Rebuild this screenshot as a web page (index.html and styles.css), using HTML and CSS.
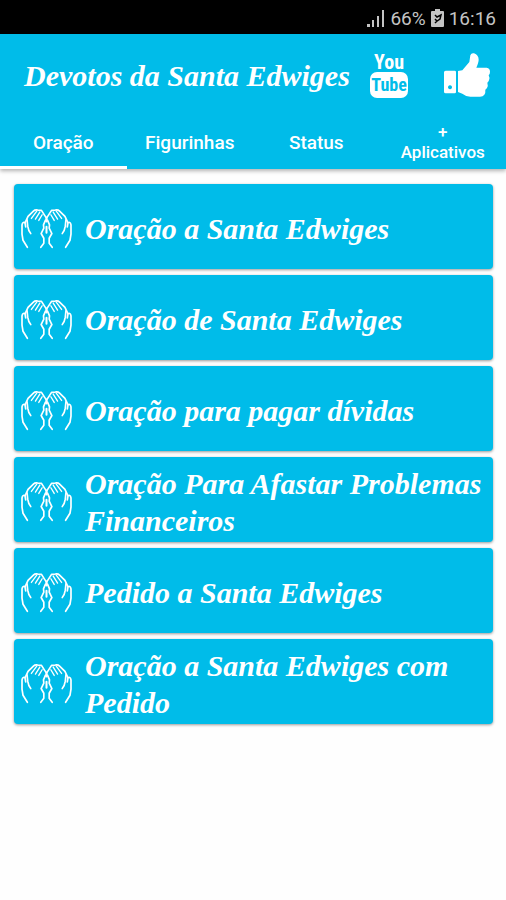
FILE: index.html
```html
<!DOCTYPE html>
<html lang="pt-BR">
<head>
<meta charset="utf-8">
<meta name="viewport" content="width=device-width, initial-scale=1">
<title>Devotos da Santa Edwiges</title>
<link rel="stylesheet" href="styles.css">
</head>
<body>
<svg class="defs" aria-hidden="true">
  <symbol id="hands" viewBox="15 20 152 122">
    <g fill="none" stroke="currentColor" stroke-linecap="round" stroke-linejoin="round">
      <g id="hand" stroke-width="5">
        <path d="M34 137L21 116L18 98V70Q20 60 27 64L29 76M28 62L36 45L52 29Q57 24 65 26L76 27L85 41L91 50"/>
        <path d="M33 55L35 74Q37 88 44 96"/>
        <path d="M62 29L46 51M71 32L58 53M78 40L68 57" stroke-width="4"/>
        <path d="M88 56L82 70L83 80L75 96L83 110V125L74 137"/>
      </g>
      <use href="#hand" transform="matrix(-1 0 0 1 182 0)"/>
      <path d="M91 48V60M91 76V94" stroke-width="6"/>
    </g>
  </symbol>
</svg>
<div class="status">
  <svg class="signal" viewBox="0 0 18 18" aria-hidden="true"><path d="M0 18v-3h3v3zM5 18v-7h2v7zM10 18V7h2v11zM15 18V1h2v17z" fill="currentColor"/></svg>
  <span>66%</span>
  <svg class="battery" viewBox="0 0 13 18" aria-hidden="true"><path d="M4 0h5v2h3q1 0 1 1v14q0 1-1 1H1q-1 0-1-1V3q0-1 1-1h3z" fill="currentColor"/><path d="M4 6l2 2 4-2-1 4-3 2-2-2M6 12l-2 2" fill="none" stroke="#000" stroke-width="1.5"/></svg>
  <span>16:16</span>
</div>
<header class="header">
  <div class="toolbar">
    <h1 class="title">Devotos da Santa Edwiges</h1>
    <button class="action" type="button" aria-label="YouTube">
      <span class="you">You</span>
      <span class="tube">Tube</span>
    </button>
    <button class="action" type="button" aria-label="Curtir">
      <svg class="thumb" viewBox="262 152 144 138" aria-hidden="true">
        <path fill="currentColor" fill-rule="evenodd" d="M270 208H297Q301 208 301 212V272Q301 276 297 276H270Q265 276 265 271V213Q265 208 270 208ZM283 252a6 6 0 1 0 .1 0Z"/>
        <path fill="currentColor" d="M307 209L320 207L341 182L344 162Q347 154 355 156Q369 161 369 175Q369 183 362 199H393Q403 201 403 211Q403 219 399 222Q403 229 400 237Q398 242 395 244Q398 253 394 260Q391 264 389 265Q390 274 386 280Q382 286 373 286H344Q331 286 320 277L307 272Z"/>
      </svg>
    </button>
  </div>
  <nav class="tabs">
    <a class="tab active" href="#oracao" aria-current="page">Oração</a>
    <a class="tab" href="#figurinhas">Figurinhas</a>
    <a class="tab" href="#status">Status</a>
    <a class="tab small" href="#aplicativos">+<br>Aplicativos</a>
  </nav>
</header>
<main class="list" id="oracao">
  <button class="card" type="button"><svg class="icon" aria-hidden="true"><use href="#hands"/></svg><span>Oração a Santa Edwiges</span></button>
  <button class="card" type="button"><svg class="icon" aria-hidden="true"><use href="#hands"/></svg><span>Oração de Santa Edwiges</span></button>
  <button class="card" type="button"><svg class="icon" aria-hidden="true"><use href="#hands"/></svg><span>Oração para pagar dívidas</span></button>
  <button class="card" type="button"><svg class="icon" aria-hidden="true"><use href="#hands"/></svg><span>Oração Para Afastar Problemas Financeiros</span></button>
  <button class="card" type="button"><svg class="icon" aria-hidden="true"><use href="#hands"/></svg><span>Pedido a Santa Edwiges</span></button>
  <button class="card" type="button"><svg class="icon" aria-hidden="true"><use href="#hands"/></svg><span>Oração a Santa Edwiges com Pedido</span></button>
</main>
</body>
</html>
```
FILE: styles.css
```css
* {
  box-sizing: border-box;
}

body {
  margin: 0;
  background: #fefefe;
  font-family: Roboto, sans-serif;
}

button {
  border: 0;
  padding: 0;
  background: none;
  color: inherit;
  font: inherit;
}

.defs {
  position: absolute;
  width: 0;
  height: 0;
}

.status {
  display: flex;
  align-items: center;
  justify-content: flex-end;
  gap: 5px;
  height: 34px;
  padding: 2px 10px 0 0;
  background: #000;
  color: #c4c4c4;
  font-size: 19px;
}

.signal {
  width: 18px;
  height: 18px;
}

.battery {
  width: 13px;
  height: 18px;
}

.header {
  background: #00bce9;
  color: #fff;
  box-shadow: 0 2px 4px rgba(0, 0, 0, 0.3);
}

.toolbar {
  display: flex;
  align-items: center;
  height: 82px;
  padding: 0 15px 0 24px;
}

.title {
  flex: 1;
  margin: 0;
  font: italic bold 30px/37px "Liberation Serif", serif;
  white-space: nowrap;
}

.action {
  display: flex;
  flex-direction: column;
  align-items: center;
  width: 48px;
}

.action + .action {
  margin-left: 30px;
}

.you,
.tube {
  font: bold 20px/20px "Liberation Sans Narrow", "Roboto Condensed", "Open Sans Condensed", Roboto, sans-serif;
}

.tube {
  width: 38px;
  height: 26px;
  border-radius: 7px;
  background: #fff;
  color: #00bce9;
  font-size: 18px;
  line-height: 26px;
}

.thumb {
  width: 48px;
  height: 46px;
}

.tabs {
  display: grid;
  grid-template-columns: repeat(4, 1fr);
  height: 53px;
}

.tab {
  display: flex;
  align-items: center;
  justify-content: center;
  padding-top: 2px;
  border-bottom: 3px solid transparent;
  color: inherit;
  font-size: 19px;
  font-weight: 500;
  text-align: center;
  text-decoration: none;
}

.tab.active {
  border-color: #fff;
}

.tab.small {
  font-size: 17px;
  line-height: 20px;
}

.list {
  display: flex;
  flex-direction: column;
  gap: 6px;
  padding: 15px 13px 15px 14px;
}

.card {
  display: flex;
  align-items: center;
  gap: 13px;
  min-height: 85px;
  padding: 4px 4px 0 7px;
  border-radius: 4px;
  background: #00bce9;
  color: #fff;
  box-shadow: 0 1px 3px rgba(0, 0, 0, 0.4);
  font: italic bold 30px/37px "Liberation Serif", serif;
  text-align: left;
}

.icon {
  flex: none;
  width: 51px;
  height: 41px;
}
```
